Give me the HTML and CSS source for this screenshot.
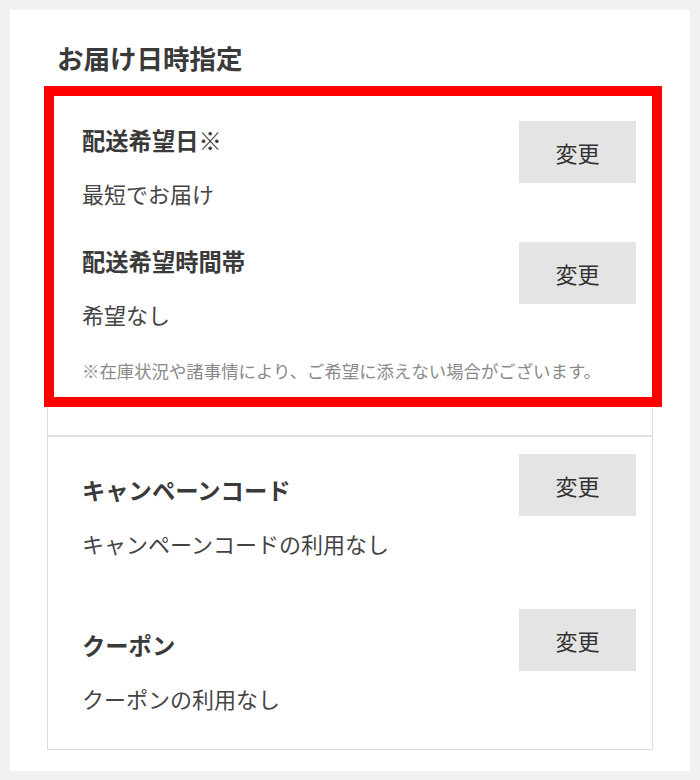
FILE: index.html
```html
<!DOCTYPE html>
<html lang="ja">
<head>
  <meta charset="utf-8">
  <title>お届け日時指定</title>
  <link rel="stylesheet" href="styles.css">
</head>
<body>
  <div class="panel">
    <div class="title">お届け日時指定</div>

    <div class="card">
      <div class="section delivery">
        <div class="row">
          <div class="info">
            <div class="label">配送希望日※</div>
            <div class="value">最短でお届け</div>
          </div>
          <button class="change">変更</button>
        </div>
        <div class="row">
          <div class="info">
            <div class="label">配送希望時間帯</div>
            <div class="value">希望なし</div>
          </div>
          <button class="change">変更</button>
        </div>
        <div class="note">※在庫状況や諸事情により、ご希望に添えない場合がございます。</div>
        <div class="highlight"></div>
      </div>

      <div class="section options">
        <div class="row">
          <div class="info">
            <div class="label">キャンペーンコード</div>
            <div class="value">キャンペーンコードの利用なし</div>
          </div>
          <button class="change">変更</button>
        </div>
        <div class="row">
          <div class="info">
            <div class="label">クーポン</div>
            <div class="value">クーポンの利用なし</div>
          </div>
          <button class="change">変更</button>
        </div>
      </div>
    </div>
  </div>
</body>
</html>
```

FILE: styles.css
```css
body,
html {
  margin: 0;
  padding: 0;
}

body {
  background-color: #f1f1f1;
  padding: 10px;
  font-family: "Noto Sans CJK JP", "Noto Sans", sans-serif;
  color: #333333;
}

.panel {
  background-color: #ffffff;
  padding: 30px 37px 21px;
}

.title {
  font-size: 26.5px;
  font-weight: bold;
  line-height: 36px;
  color: #3a3a3a;
  margin: 0 0 16px 10px;
}

.card {
  border: 1px solid #dddddd;
}

.section {
  padding: 0 16px 0 34px;
}

.delivery {
  position: relative;
  padding-top: 28px;
  padding-bottom: 51px;
  border-bottom: 2px solid #e0e0e0;
}

.options {
  padding-top: 17px;
  padding-bottom: 34px;
}

.row {
  display: flex;
  justify-content: space-between;
  align-items: flex-start;
}

.delivery .row {
  margin-bottom: 32px;
}

.delivery .row:nth-child(2) {
  margin-bottom: 27px;
}

.options .row + .row {
  margin-top: 49px;
}

.delivery .info {
  padding-top: 3px;
}

.options .info {
  padding-top: 20px;
}

.label {
  font-size: 23.3px;
  font-weight: bold;
  line-height: 33px;
  color: #3a3a3a;
}

.value {
  font-size: 22px;
  line-height: 33px;
  margin-top: 20px;
  color: #444444;
}

.note {
  font-size: 17.4px;
  line-height: 26px;
  color: #8a8a8a;
}

.change {
  width: 117px;
  height: 62px;
  border: none;
  border-radius: 0;
  background-color: #e4e4e4;
  font-family: inherit;
  font-size: 22px;
  color: #333333;
  padding: 0;
  cursor: pointer;
}

/* red frame marking the delivery block */
.highlight {
  position: absolute;
  top: -7px;
  left: -4px;
  right: -10px;
  bottom: 28px;
  border: 10px solid #ff0000;
  pointer-events: none;
}
```
